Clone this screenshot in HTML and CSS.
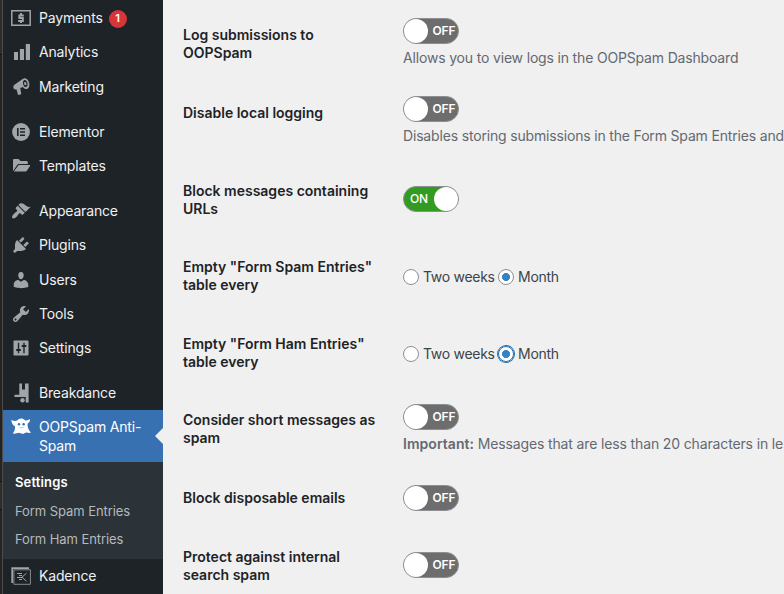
FILE: index.html
```html
<!DOCTYPE html>
<html lang="en">
<head>
<meta charset="utf-8">
<title>OOPSpam Anti-Spam Settings</title>
<link rel="stylesheet" href="styles.css">
</head>
<body>
<div class="edge"></div>
<nav class="menu">
  <a class="item"><svg class="icon" viewBox="0 0 20 20"><path fill="none" stroke="currentColor" stroke-width="1.500" d="M.8 2.800h18.400v14.400H.8z"/><path fill="none" stroke="currentColor" stroke-width="2" d="M12.800 7.500H8.400V10h3.400v3H7.200M10 5v2m0 6v2"/></svg><span>Payments</span><span class="badge">1</span></a>
  <a class="item"><svg class="icon" viewBox="0 0 20 20"><path fill="currentColor" d="M14.800 2H19v16h-4.200zM8.900 7H13v11H8.900zM3 10h4v8H3z"/></svg><span>Analytics</span></a>
  <a class="item"><svg class="icon" viewBox="0 0 20 20"><path fill="currentColor" fill-rule="evenodd" d="M18.200 5.900c.6 3-.5 5.700-2.500 6.100-1.300.3-2.700-.6-3.700-2.100L9.200 11l1.100 6.200-3.200.8-1.700-5.700-1.500.1c-1.700-.4-2.200-3-.8-4.300L12 1.800c.3-.2.7-.3 1-.4 2.100-.4 4.500 1.600 5.200 4.500zM13.500 3c-1.200.3-1.800 2-1.400 4 .4 1.900 1.700 3.300 2.900 3.100 1.300-.3 1.900-2 1.500-4-.4-1.900-1.700-3.300-3-3.100zm.2 2c.8-.1 1.500.5 1.700 1.400.2.900-.1 1.700-.8 1.800-.7.200-1.300-.5-1.500-1.400-.1-.9.100-1.700.6-1.800z"/></svg><span>Marketing</span></a>
  <div class="sep"></div>
  <a class="item"><svg class="icon" viewBox="0 0 20 20"><circle cx="10" cy="10" r="8.900" fill="currentColor"/><path fill="#1d2327" d="M6 6h1.600v8H6zM9 6h5v1.600H9zM9 9.200h5v1.600H9zM9 12.400h5V14H9z"/></svg><span>Elementor</span></a>
  <a class="item"><svg class="icon" viewBox="0 0 20 20"><path fill="currentColor" d="M2 4.300C2 3.500 2.500 3 3.300 3h4.200l2 2h6c.8 0 1.300.5 1.300 1.300V8H8.200c-1 0-1.700.5-2.200 1.300l-4 6z"/><path fill="currentColor" d="M7.600 9.100H18.600c.6 0 .7.400.4.900l-3 4.500c-.4.600-.8.900-1.500.9H2.900z"/></svg><span>Templates</span></a>
  <div class="sep"></div>
  <a class="item"><svg class="icon" viewBox="0 0 20 20"><path fill="currentColor" d="M14.480 11.060 7.410 3.990l1.500-1.500c.5-.56 2.300-.47 3.510.32 1.210.8 1.430 1.280 2.910 2.100 1.180.64 2.450 1.260 4.450.85zm-.71.710L6.700 4.700 4.930 6.470c-.39.390-.39 1.020 0 1.410l1.060 1.060c.39.390.39 1.030 0 1.420-.6.600-1.430 1.110-2.210 1.690-.35.260-.7.530-1.010.840C1.430 14.230.4 16.080 1.400 17.070c.99 1 2.840-.03 4.180-1.360.31-.31.580-.66.850-1.020.57-.78 1.080-1.610 1.690-2.210.39-.39 1.020-.39 1.410 0l1.060 1.060c.39.390 1.020.390 1.410 0z"/></svg><span>Appearance</span></a>
  <a class="item"><svg class="icon" viewBox="0 0 20 20"><path fill="currentColor" d="M13.110 4.360 9.870 7.600 8 5.730l3.240-3.240c.35-.34 1.050-.2 1.560.32.520.51.660 1.210.310 1.550zm-8 1.770.91-1.120 9.010 9.010-1.190.84c-.71.710-2.630 1.160-3.820 1.160H6.140L4.900 17.260c-.59.590-1.540.590-2.120 0-.59-.58-.59-1.530 0-2.120L4 13.900v-3.880c0-1.190.4-3.180 1.110-3.890zm7.260 3.970 3.240-3.240c.34-.35 1.040-.21 1.550.31.520.510.660 1.210.310 1.550l-3.240 3.250z"/></svg><span>Plugins</span></a>
  <a class="item users"><svg class="icon" viewBox="0 0 20 20"><path fill="currentColor" d="M10 9.250c-2.270 0-2.730-3.440-2.730-3.440C7 4.020 7.820 2 9.970 2c2.160 0 2.980 2.020 2.710 3.810 0 0-.41 3.440-2.680 3.440zm0 2.570L12.720 10c2.390 0 4.520 2.330 4.520 4.530v2.490s-3.650 1.130-7.240 1.130c-3.650 0-7.240-1.130-7.240-1.130v-2.490c0-2.250 1.940-4.480 4.470-4.480z"/></svg><span>Users</span></a>
  <a class="item"><svg class="icon" viewBox="0 0 20 20"><path fill="currentColor" d="M16.680 9.770c-1.340 1.340-3.300 1.670-4.950.99l-5.410 6.520c-.99.990-2.590.990-3.580 0s-.99-2.590 0-3.570l6.520-5.420c-.68-1.650-.35-3.610.99-4.950 1.280-1.280 3.120-1.620 4.720-1.060l-2.890 2.890 2.820 2.820 2.860-2.870c.53 1.580.180 3.390-1.080 4.650zM3.810 16.210c.4.390 1.040.390 1.430 0 .4-.4.400-1.040 0-1.430-.39-.4-1.030-.4-1.430 0-.39.390-.39 1.030 0 1.430z"/></svg><span>Tools</span></a>
  <a class="item"><svg class="icon" viewBox="0 0 20 20"><path fill="currentColor" fill-rule="evenodd" d="M3.500 2.500h13c.6 0 1 .4 1 1v13c0 .6-.4 1-1 1h-13c-.6 0-1-.4-1-1v-13c0-.6.400-1 1-1zM8.200 11H9c.55 0 1 .45 1 1s-.45 1-1 1h-.8v2.200H6.800V13H6c-.55 0-1-.45-1-1s.45-1 1-1h.8V4.800h1.400zM13.700 9v6.200h-1.400V9H11.500c-.55 0-1-.45-1-1s.45-1 1-1h.8V4.800h1.400V7h.8c.55 0 1 .45 1 1s-.45 1-1 1z"/></svg><span>Settings</span></a>
  <div class="sep"></div>
  <a class="item"><svg class="icon" viewBox="0 0 20 20"><path fill="currentColor" d="M8.300.5H11v6h3V.5h3.600v19h-2.900V14H3.500V11.800h4.800z"/><circle cx="11.500" cy="17.300" r="2.200" fill="currentColor"/></svg><span>Breakdance</span></a>
  <a class="item current"><svg class="icon" viewBox="0 0 20 20"><path fill="currentColor" d="M6.200 3.500C8 .8 12 .8 14 3.200c1.800.6 3.500-.4 5-.9.3 1.700-.8 3.400-2.400 4.200-.2 3 .4 5.800 3.300 9.300-1.900.4-3-.3-4.500-.4-1.500.2-2.500 1.500-4 1.400-1.500 0-2.300-.9-3.700-1-1.500.2-3.300 1.300-6 .8C3.400 14.400 4.300 12 4 9.200 2 8.500.5 6 .3 2.700c2 1.500 4 1.600 5.900.8z"/><circle cx="8" cy="7.300" r="1.200" fill="#3871b1"/><circle cx="12.600" cy="7.300" r="1.200" fill="#3871b1"/><path d="M8.500 10.600q2 .4 4-.2" stroke="#3871b1" stroke-width=".4" fill="none"/></svg><span>OOPSpam Anti-<br>Spam</span></a>
  <div class="submenu"><a class="on">Settings</a><a>Form Spam Entries</a><a>Form Ham Entries</a></div>
  <a class="item"><svg class="icon" viewBox="0 0 20 20"><path fill="none" stroke="currentColor" stroke-width="1.700" d="M1.200 17V2.200H18"/><path fill="none" stroke="currentColor" stroke-width=".8" d="M2.900 3.800h16.500v14.500H2.900z"/><path fill="none" stroke="currentColor" stroke-width="1" d="M6 7.500h5m-3 2h3m-5 2h5m-3 2h3m4.500-6.300-4.500 4 4.500 4"/></svg><span>Kadence</span></a>
</nav>
<main class="settings">
  <section class="row r1"><h3>Log submissions to OOPSpam</h3><div class="field"><div class="toggle"><i></i><b>OFF</b></div><p>Allows you to view logs in the OOPSpam Dashboard</p></div></section>
  <section class="row r2"><h3>Disable local logging</h3><div class="field"><div class="toggle"><i></i><b>OFF</b></div><p>Disables storing submissions in the Form Spam Entries and</p></div></section>
  <section class="row r3"><h3>Block messages containing URLs</h3><div class="field"><div class="toggle active"><b>ON</b><i></i></div></div></section>
  <section class="row r4"><h3>Empty "Form Spam Entries" table every</h3><div class="field radios"><span class="radio"></span><label>Two weeks</label><span class="radio checked"></span><label>Month</label></div></section>
  <section class="row r5"><h3>Empty "Form Ham Entries" table every</h3><div class="field radios"><span class="radio"></span><label>Two weeks</label><span class="radio checked focus"></span><label>Month</label></div></section>
  <section class="row r6"><h3>Consider short messages as spam</h3><div class="field"><div class="toggle"><i></i><b>OFF</b></div><p class="note"><strong>Important:</strong> Messages that are less than 20 characters in le</p></div></section>
  <section class="row r7"><h3>Block disposable emails</h3><div class="field"><div class="toggle"><i></i><b>OFF</b></div></div></section>
  <section class="row r8"><h3>Protect against internal search spam</h3><div class="field"><div class="toggle"><i></i><b>OFF</b></div></div></section>
</main>
</body>
</html>
```
FILE: styles.css
```css
* { box-sizing: border-box; }
body { margin: 0; width: 784px; height: 594px; overflow: hidden; display: flex; background: #f0f0f0; color: #3c434a; font: 14px/18px Inter, "Liberation Sans", sans-serif; }
.edge { width: 3px; flex: none; border-right: 1px solid #4c4c4d; background: linear-gradient(#2d2d2b 54px, #111 54px 55px, #242424 55px 481px, #111 481px 482px, #2d2d2b 482px 509px, #111 509px 510px, #242424 510px); }
.menu { width: 160px; flex: none; padding-top: 1px; background: #1d2327; color: #f0f0f1; letter-spacing: -.17px; }
.item { display: flex; height: 34.3px; padding: 8px 0 0 8px; }
.item .icon { width: 20px; height: 20px; flex: none; margin: -1px 8px 0 0; color: #a0a5aa; }
.item.users { padding-top: 8.6px; }
.sep { height: 10.7px; }
.badge { width: 18px; height: 18px; margin: 1px 0 0 6px; border-radius: 50%; background: #d63638; color: #fff; font-size: 11px; font-weight: 600; line-height: 17px; text-align: center; letter-spacing: 0; }
.current { position: relative; height: 52px; padding-top: 7px; background: #3871b1; color: #fff; line-height: 19px; }
.current .icon { color: #fff; margin-top: 0; }
.current::after { content: ""; position: absolute; right: 0; top: 18px; border: 8px solid transparent; border-left: 0; border-right-color: #f0f0f0; }
.submenu { display: flex; flex-direction: column; height: 97px; padding: 6px 12px 0; background: #2c3338; color: #b4b9be; font-size: 13px; line-height: 28.5px; letter-spacing: -.07px; }
.submenu .on { color: #fff; font-weight: 600; letter-spacing: .15px; }
.settings { flex: 1; min-width: 0; overflow: hidden; padding: 6px 0 0 20px; }
.row { display: grid; grid-template-columns: 220px 1fr; height: 78px; }
.r3 { height: 76px; }
.r4 { height: 77px; }
.r5 { height: 76px; }
.r6 { height: 78px; }
.r7 { height: 59px; }
h3 { width: 200px; margin: 0; padding-top: 20px; color: #1d2327; font-size: 14px; font-weight: 600; line-height: 18.200px; }
.field { padding-top: 12px; white-space: nowrap; }
.r3 .field { padding-top: 24px; }
.r6 .field { padding-top: 13px; }
.r7 .field { padding-top: 16px; }
.r8 .field { padding-top: 24px; }
.field p { margin: 5px 0 0; color: #646970; letter-spacing: -.17px; }
.field .note { letter-spacing: -.14px; }
.note strong { font-weight: 600; letter-spacing: .04px; }
.toggle { display: flex; align-items: center; width: 56px; height: 26px; border: 1px solid #8c8f94; border-radius: 13px; background: #6d6d6d; color: #fff; font-size: 12px; line-height: 24px; }
.toggle i { width: 24px; height: 24px; flex: none; border-radius: 50%; background: #fff; }
.toggle b { margin-left: 4.500px; font-weight: 600; letter-spacing: -.1px; }
.toggle.active { background: #339a22; justify-content: space-between; }
.toggle.active b { margin-left: 6px; font-weight: 500; }
.radios { display: flex; align-items: center; height: 18px; padding: 0; margin-top: 30px; letter-spacing: -.3px; }
.radio { width: 16px; height: 16px; flex: none; margin-right: 4px; border: 1px solid #8c8f94; border-radius: 50%; background: #fff; }
label + .radio { margin-left: 3.500px; }
.radio.checked { background: radial-gradient(circle, #3582c4 3.700px, #fff 4.300px); }
.radio.focus { border-color: #2271b1; box-shadow: 0 0 0 1px #2271b1; }
```
